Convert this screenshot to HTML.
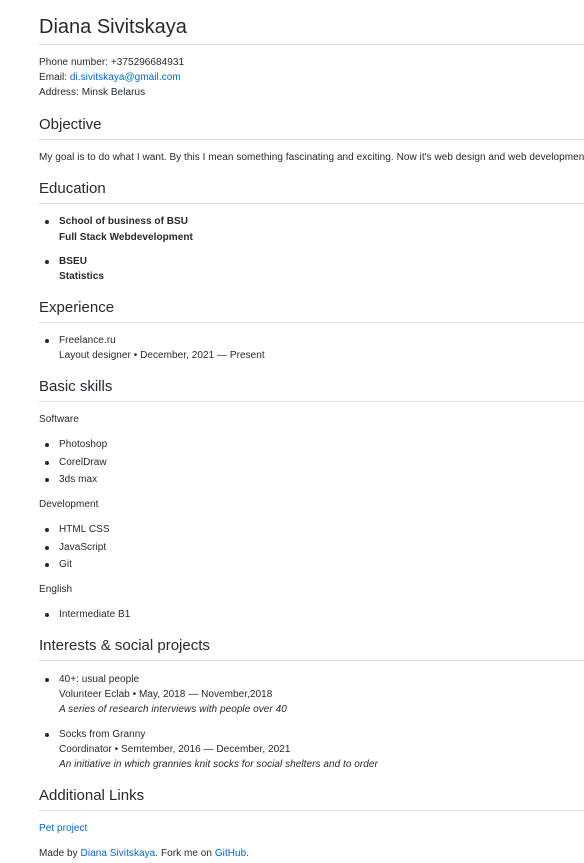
<!DOCTYPE html>
<html><head><meta charset="utf-8"><style>
body{margin:0;width:584px;height:863px;overflow:hidden;background:#fff;position:relative;font-family:"Liberation Sans","DejaVu Sans",sans-serif;color:#24292e;}
.t{position:absolute;left:39px;font-size:10px;line-height:14px;white-space:nowrap;margin-top:1px;letter-spacing:0.05px}
.i{left:59px}
.b{font-weight:600}
.h1{position:absolute;left:39px;font-size:20px;line-height:26px;white-space:nowrap;margin-top:0px}
.h2{position:absolute;left:39px;font-size:15px;line-height:20px;white-space:nowrap;margin-top:0px}
.hr{position:absolute;left:39px;right:0;height:1px;background:#dfe2e5}
.d{position:absolute;left:45px;width:4px;height:4px;border-radius:50%;background:#24292e;margin-top:1px}
a{color:#0366d6;text-decoration:none}
em{font-style:italic}
</style></head><body>
<div class="h1" style="top:14px">Diana Sivitskaya</div><div class="hr" style="top:44px"></div>
<div class="t" style="top:55px">Phone number: +375296684931</div>
<div class="t" style="top:70px">Email: <a>di.sivitskaya@gmail.com</a></div>
<div class="t" style="top:85px">Address: Minsk Belarus</div>
<div class="h2" style="top:115px">Objective</div><div class="hr" style="top:139px"></div>
<div class="t" style="top:150px">My goal is to do what I want. By this I mean something fascinating and exciting. Now it's web design and web development.</div>
<div class="h2" style="top:179px">Education</div><div class="hr" style="top:203px"></div>
<div class="d" style="top:219px"></div><div class="t i b" style="top:214px">School of business of BSU</div>
<div class="t i b" style="top:230px">Full Stack Webdevelopment</div>
<div class="d" style="top:259px"></div><div class="t i b" style="top:254px">BSEU</div>
<div class="t i b" style="top:269px">Statistics</div>
<div class="h2" style="top:298px">Experience</div><div class="hr" style="top:322px"></div>
<div class="d" style="top:338px"></div><div class="t i" style="top:333px">Freelance.ru</div>
<div class="t i" style="top:348px">Layout designer • December, 2021 — Present</div>
<div class="h2" style="top:377px">Basic skills</div><div class="hr" style="top:401px"></div>
<div class="t" style="top:412px">Software</div>
<div class="d" style="top:442px"></div><div class="t i" style="top:437px">Photoshop</div>
<div class="d" style="top:460px"></div><div class="t i" style="top:455px">CorelDraw</div>
<div class="d" style="top:477px"></div><div class="t i" style="top:472px">3ds max</div>
<div class="t" style="top:497px">Development</div>
<div class="d" style="top:527px"></div><div class="t i" style="top:522px">HTML CSS</div>
<div class="d" style="top:545px"></div><div class="t i" style="top:540px">JavaScript</div>
<div class="d" style="top:562px"></div><div class="t i" style="top:557px">Git</div>
<div class="t" style="top:582px">English</div>
<div class="d" style="top:612px"></div><div class="t i" style="top:607px">Intermediate B1</div>
<div class="h2" style="top:636px">Interests &amp; social projects</div><div class="hr" style="top:660px"></div>
<div class="d" style="top:677px"></div><div class="t i" style="top:672px">40+: usual people</div>
<div class="t i" style="top:687px">Volunteer Eclab • May, 2018 — November,2018</div>
<div class="t i" style="top:702px"><em>A series of research interviews with people over 40</em></div>
<div class="d" style="top:732px"></div><div class="t i" style="top:727px">Socks from Granny</div>
<div class="t i" style="top:742px">Coordinator • Semtember, 2016 — December, 2021</div>
<div class="t i" style="top:757px"><em>An initiative in which grannies knit socks for social shelters and to order</em></div>
<div class="h2" style="top:786px">Additional Links</div><div class="hr" style="top:810px"></div>
<div class="t" style="top:821px"><a>Pet project</a></div>
<div class="t" style="top:846px">Made by <a>Diana Sivitskaya</a>. Fork me on <a>GitHub</a>.</div>
</body></html>
